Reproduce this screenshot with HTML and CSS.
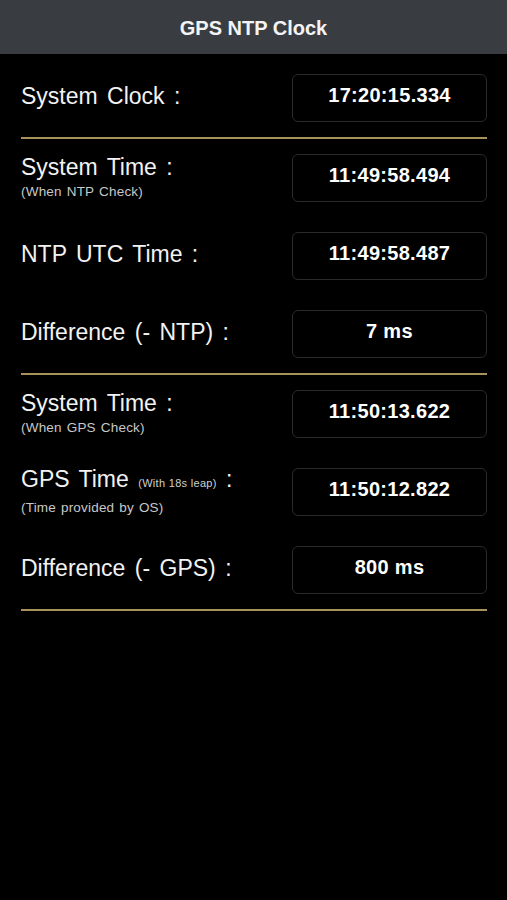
FILE: index.html
```html
<!DOCTYPE html>
<html lang="en">
<head>
  <meta charset="UTF-8">
  <title>GPS NTP Clock</title>
  <link rel="stylesheet" href="styles.css">
</head>
<body>

  <div class="header">GPS NTP Clock</div>

  <div class="content">

    <div class="section">
      <div class="row">
        <div class="label">
          <div class="main">System Clock :</div>
        </div>
        <div class="value" id="systemClock">17:20:15.334</div>
      </div>
    </div>

    <div class="section">
      <div class="row">
        <div class="label">
          <div class="main">System Time :</div>
          <div class="sub">(When NTP Check)</div>
        </div>
        <div class="value">11:49:58.494</div>
      </div>
      <div class="row">
        <div class="label">
          <div class="main">NTP UTC Time :</div>
        </div>
        <div class="value">11:49:58.487</div>
      </div>
      <div class="row">
        <div class="label">
          <div class="main">Difference (- NTP) :</div>
        </div>
        <div class="value">7 ms</div>
      </div>
    </div>

    <div class="section">
      <div class="row">
        <div class="label">
          <div class="main">System Time :</div>
          <div class="sub">(When GPS Check)</div>
        </div>
        <div class="value">11:50:13.622</div>
      </div>
      <div class="row">
        <div class="label">
          <div class="main">GPS Time <span class="leap">(With 18s leap)</span> :</div>
          <div class="sub">(Time provided by OS)</div>
        </div>
        <div class="value">11:50:12.822</div>
      </div>
      <div class="row">
        <div class="label">
          <div class="main">Difference (- GPS) :</div>
        </div>
        <div class="value">800 ms</div>
      </div>
    </div>

  </div>

</body>
</html>
```

FILE: styles.css
```css
body {
  margin: 0;
  background-color: #000;
  color: #fff;
  font-family: "Liberation Sans", Arial, sans-serif;
}

.header {
  height: 54px;
  line-height: 56px;
  background-color: #393d42;
  text-align: center;
  font-size: 20px;
  font-weight: bold;
  color: #f4f4f4;
}

.content {
  padding: 5px 20px 0 21px;
}

.section {
  display: flex;
  flex-direction: column;
  gap: 30px;
  padding: 15px 0;
  border-bottom: 2px solid #a8915a;
}

.row {
  display: flex;
  align-items: center;
  justify-content: space-between;
  height: 48px;
}

.label {
  padding-bottom: 4px;
}

.label .main {
  font-size: 23px;
  line-height: 28px;
  word-spacing: 3px;
  color: #f2f2f2;
}

.label .sub {
  font-size: 13.5px;
  line-height: 16px;
  letter-spacing: 0.2px;
  word-spacing: 1px;
  color: #c8c8c8;
  margin: 3px 0 -1px;
}

.leap {
  font-size: 11px;
  letter-spacing: 0.3px;
  word-spacing: 0;
  color: #d0d0d0;
}

.value {
  width: 193px;
  height: 41px;
  padding-bottom: 5px;
  border: 1px solid #2a2a2a;
  border-radius: 6px;
  display: flex;
  align-items: center;
  justify-content: center;
  font-size: 20px;
  font-weight: bold;
  letter-spacing: 0.3px;
  box-sizing: content-box;
}
```
